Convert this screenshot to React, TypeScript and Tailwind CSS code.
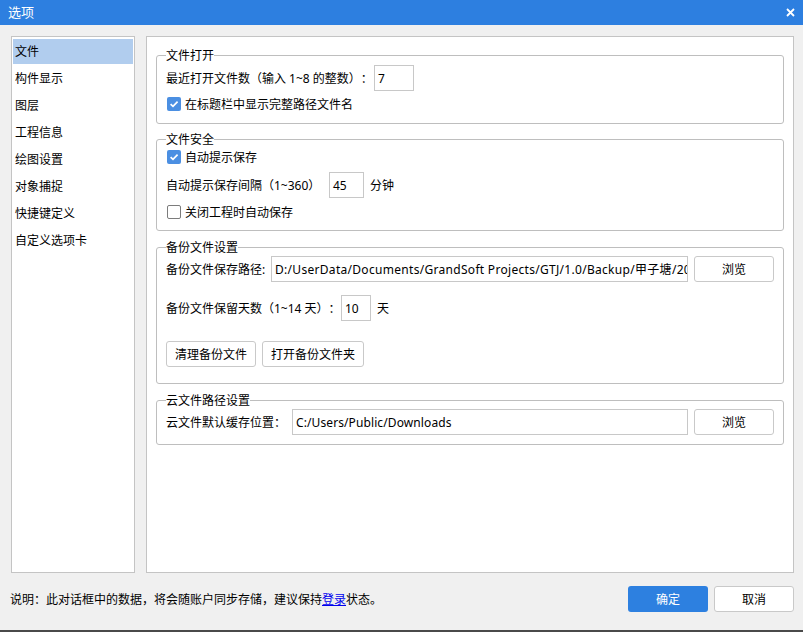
import type { ReactNode } from 'react';

const navItems = ['文件', '构件显示', '图层', '工程信息', '绘图设置', '对象捕捉', '快捷键定义', '自定义选项卡'];

function CheckBox({ checked }: { checked: boolean }) {
  if (checked) {
    return (
      <span className="w-[14px] h-[14px] rounded-[2px] bg-[#4b8fe2] flex items-center justify-center shrink-0">
        <svg width="10" height="10" viewBox="0 0 10 10">
          <path d="M1.6 5.1 L4 7.4 L8.6 2.6" stroke="white" strokeWidth="1.7" fill="none" />
        </svg>
      </span>
    );
  }
  return <span className="w-[14px] h-[14px] rounded-[2px] border border-[#7c7c7c] bg-white shrink-0" />;
}

function Group({ title, className, children }: { title: string; className: string; children: ReactNode }) {
  return (
    <fieldset className={`min-w-0 border border-[#bebebe] rounded-[3px] px-[9px] ${className}`}>
      <legend className="leading-[17px]">{title}</legend>
      {children}
    </fieldset>
  );
}

function Field({ value, className }: { value: string; className: string }) {
  return (
    <div className={`min-w-0 h-[26px] border border-[#c8c8c8] bg-white pl-[3px] flex items-center overflow-hidden whitespace-nowrap ${className}`}>
      {value}
    </div>
  );
}

function Btn({ label, className }: { label: string; className: string }) {
  return (
    <button className={`shrink-0 h-[26px] border border-[#c9c9c9] rounded-[3px] bg-white flex items-center justify-center ${className}`}>
      {label}
    </button>
  );
}

export default function App() {
  return (
    <div className="w-[803px] h-[632px] bg-[#f0f0f0] flex flex-col text-[12px] leading-[17px] text-black font-['Noto_Sans','Noto_Sans_CJK_SC',sans-serif] [text-spacing-trim:space-all] overflow-hidden">
      {/* title bar */}
      <div className="h-[25px] bg-[#2d7fe0] flex items-center justify-between pl-[8px] pr-[8px] text-white text-[13px]">
        <span>选项</span>
        <svg width="9" height="9" viewBox="0 0 9 9">
          <path d="M1 1 L8 8 M8 1 L1 8" stroke="white" strokeWidth="1.8" />
        </svg>
      </div>

      {/* body */}
      <div className="flex pt-[11px] pl-[11px] gap-[11px]">
        <div className="w-[124px] h-[537px] border border-[#c4c4c4] bg-white pt-px">
          {navItems.map((item, i) => (
            <div key={item} className="h-[27px] pt-px">
              <div className={`h-[25px] mx-px pl-[2px] flex items-center ${i === 0 ? 'bg-[#b1cdee]' : ''}`}>{item}</div>
            </div>
          ))}
        </div>

        <div className="w-[648px] h-[537px] border border-[#c4c4c4] bg-white pt-[10px] px-[9px] flex flex-col">
          <Group title="文件打开" className="pb-[9px]">
            <div className="flex items-center h-[26px] mt-px">
              <span className="w-[208px] whitespace-nowrap">最近打开文件数（输入 1~8 的整数）：</span>
              <Field value="7" className="w-[40px]" />
            </div>
            <div className="flex items-center h-[20px] mt-[3px] gap-[4px] pl-px">
              <CheckBox checked />
              <span>在标题栏中显示完整路径文件名</span>
            </div>
          </Group>

          <Group title="文件安全" className="mt-[7px] pb-[8px]">
            <div className="flex items-center h-[18px] gap-[4px] pl-px">
              <CheckBox checked />
              <span>自动提示保存</span>
            </div>
            <div className="flex items-center h-[26px] mt-[6px]">
              <span className="w-[163px] whitespace-nowrap">自动提示保存间隔（1~360）</span>
              <Field value="45" className="w-[35px]" />
              <span className="ml-[6px]">分钟</span>
            </div>
            <div className="flex items-center h-[20px] mt-[4px] gap-[4px] pl-px">
              <CheckBox checked={false} />
              <span>关闭工程时自动保存</span>
            </div>
          </Group>

          <Group title="备份文件设置" className="mt-[8px] pb-[16px]">
            <div className="flex items-center h-[26px] gap-[6px]">
              <span className="w-[99px] shrink-0 whitespace-nowrap">备份文件保存路径:</span>
              <Field value="D:/UserData/Documents/GrandSoft Projects/GTJ/1.0/Backup/甲子塘/2024" className="flex-1 tracking-[0.3px]" />
              <Btn label="浏览" className="w-[80px]" />
            </div>
            <div className="flex items-center h-[26px] mt-[13px]">
              <span className="w-[175px] whitespace-nowrap">备份文件保留天数（1~14 天）：</span>
              <Field value="10" className="w-[30px]" />
              <span className="ml-[6px]">天</span>
            </div>
            <div className="flex items-center mt-[20px] gap-[6px]">
              <Btn label="清理备份文件" className="w-[90px]" />
              <Btn label="打开备份文件夹" className="w-[102px]" />
            </div>
          </Group>

          <Group title="云文件路径设置" className="mt-[8px] pb-[9px]">
            <div className="flex items-center h-[26px] gap-[6px]">
              <span className="w-[120px] shrink-0 whitespace-nowrap">云文件默认缓存位置：</span>
              <Field value="C:/Users/Public/Downloads" className="flex-1 tracking-[0.1px]" />
              <Btn label="浏览" className="w-[80px]" />
            </div>
          </Group>
        </div>
      </div>

      {/* footer */}
      <div className="h-[57px] flex items-start justify-between pt-[13px] pl-[10px] pr-[9px]">
        <div className="h-[26px] flex items-center">
          <span>说明：此对话框中的数据，将会随账户同步存储，建议保持</span>
          <span className="text-[#0000ee] underline">登录</span>
          <span>状态。</span>
        </div>
        <div className="flex gap-[6px]">
          <button className="w-[80px] h-[26px] rounded-[3px] bg-[#2d80e0] text-white flex items-center justify-center">确定</button>
          <button className="w-[80px] h-[26px] rounded-[3px] border border-[#c9c9c9] bg-white flex items-center justify-center">取消</button>
        </div>
      </div>
      <div className="h-[2px] bg-[#4a4a4a]" />
    </div>
  );
}
